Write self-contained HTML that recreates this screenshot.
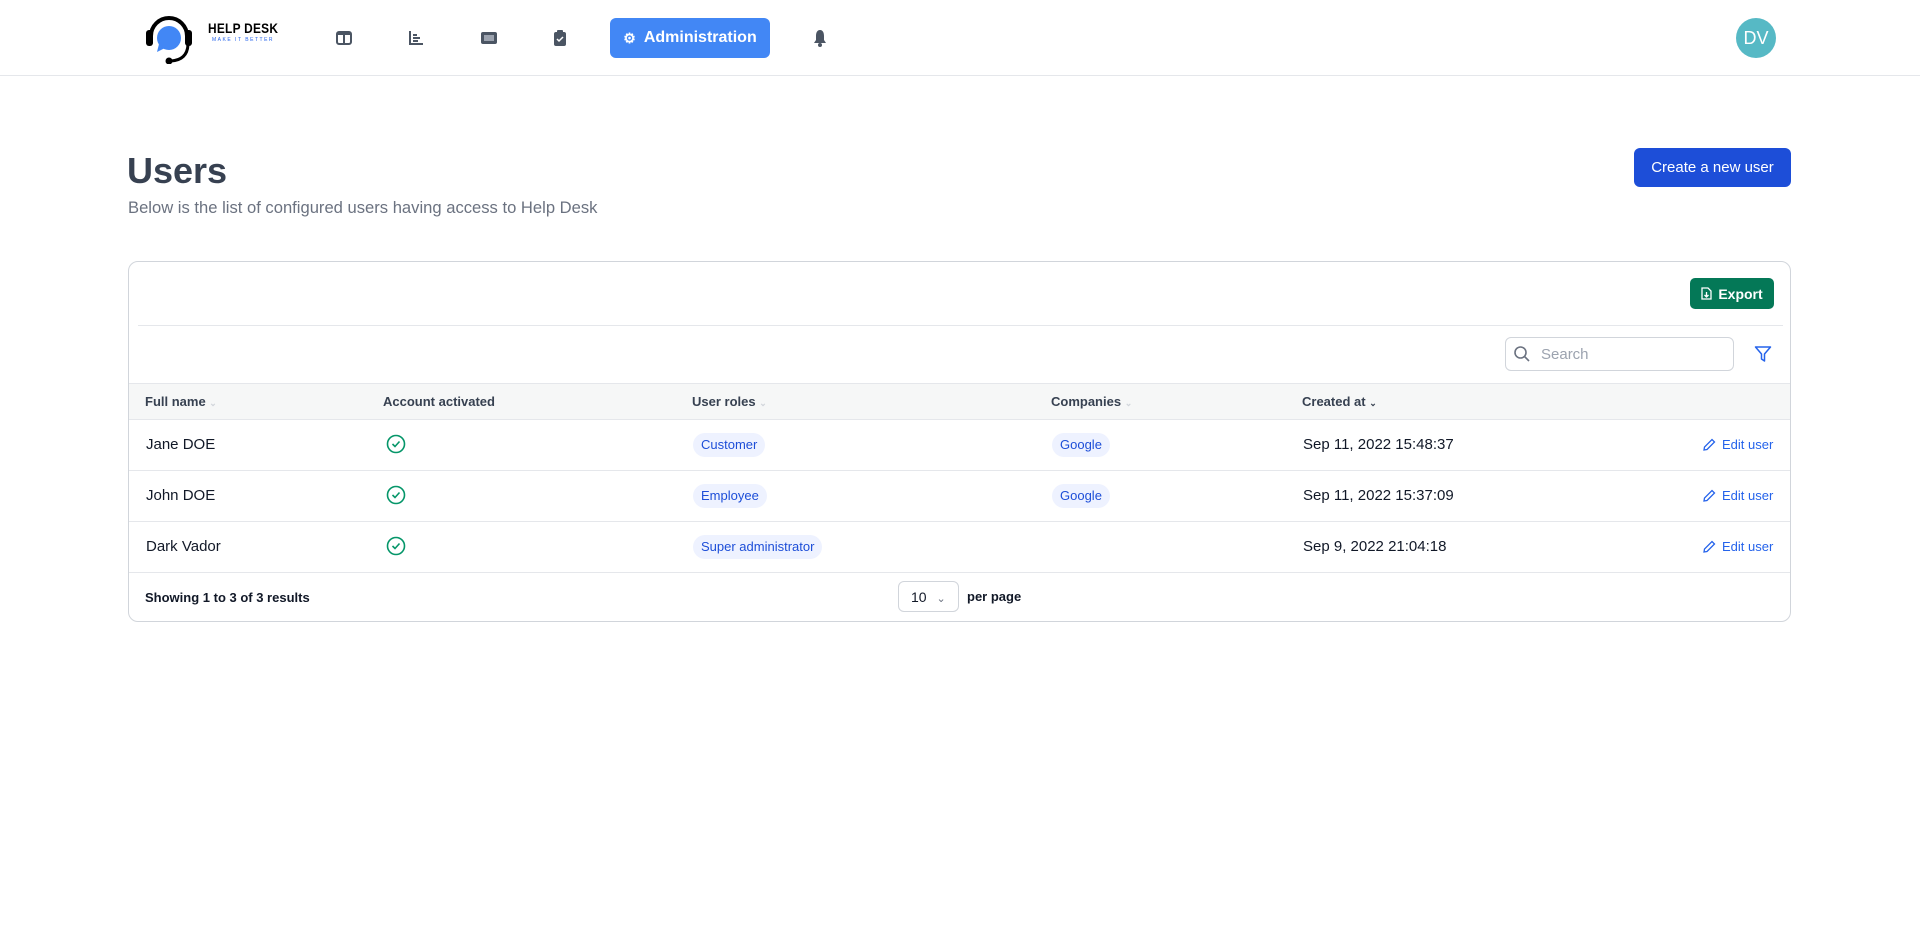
<!DOCTYPE html>
<html><head><meta charset="utf-8"><style>
*{box-sizing:border-box;margin:0;padding:0}
body{width:1920px;height:929px;background:#fff;font-family:"Liberation Sans",sans-serif;position:relative;overflow:hidden;color:#111827}
.a{position:absolute}
.nav{left:0;top:0;width:1920px;height:76px;border-bottom:1px solid #e5e7eb}
.th{font-size:13px;color:#374151;font-weight:bold;top:394px}
.td{font-size:15px;color:#111827}
.badge{background:#eef2ff;color:#1d4ed8;font-size:13px;border-radius:12px;padding:4px 8px;line-height:16px}
.edit{color:#2563eb;font-size:13px;display:flex;align-items:center;gap:6px}
.row{left:129px;width:1661px;border-top:1px solid #e5e7eb}
</style></head><body>
<div class="a nav"></div>
<svg class="a" style="left:141px;top:12px" width="60" height="52" viewBox="0 0 60 52">
<path d="M10 24 A18 18 0 0 1 46 24" fill="none" stroke="#000" stroke-width="4"/>
<rect x="5" y="18" width="7" height="16" rx="3" fill="#000"/>
<rect x="44" y="18" width="7" height="16" rx="3" fill="#000"/>
<circle cx="28" cy="26" r="12" fill="#4287f5"/>
<path d="M18 32 L16 40 L24 36Z" fill="#4287f5"/>
<path d="M47 33 Q46 48 30 49" fill="none" stroke="#000" stroke-width="3"/>
<circle cx="28" cy="49" r="3.5" fill="#000"/>
</svg>
<div class="a" style="left:208px;top:20px;font-size:14px;font-weight:bold;letter-spacing:0.3px;color:#000;transform:scaleX(0.85);transform-origin:left">HELP DESK</div>
<div class="a" style="left:212px;top:37px;font-size:5px;color:#2563eb;letter-spacing:1.5px">MAKE IT BETTER</div>
<svg class="a" style="left:336px;top:31px" width="16" height="14" viewBox="0 0 16 14"><rect x="1" y="1" width="14" height="12" rx="2" fill="none" stroke="#4b5563" stroke-width="2"/><rect x="7" y="2" width="2" height="10" fill="#4b5563"/><rect x="2" y="2" width="12" height="2" fill="#4b5563"/></svg>
<svg class="a" style="left:408px;top:30px" width="16" height="16" viewBox="0 0 16 16"><path d="M2 1V14H15" fill="none" stroke="#4b5563" stroke-width="2"/><path d="M5 5H9M5 8H12M5 11H10" stroke="#4b5563" stroke-width="2"/></svg>
<svg class="a" style="left:480px;top:31px" width="18" height="14" viewBox="0 0 18 14"><rect x="1" y="1" width="16" height="12" rx="2" fill="#4b5563"/><rect x="4" y="4" width="10" height="6" fill="#9ca3af"/></svg>
<svg class="a" style="left:553px;top:29px" width="14" height="18" viewBox="0 0 14 18"><rect x="1" y="3" width="12" height="14" rx="2" fill="#4b5563"/><rect x="4" y="1" width="6" height="4" rx="1" fill="#4b5563"/><path d="M4 10L6 12L10 8" fill="none" stroke="#fff" stroke-width="1.5"/></svg>
<div class="a" style="left:610px;top:18px;width:160px;height:40px;background:#4287f5;border-radius:6px;color:#fff;font-size:16px;font-weight:bold;display:flex;align-items:center;justify-content:center;gap:8px">
<span style="font-size:14px">⚙</span>Administration</div>
<svg class="a" style="left:813px;top:29px" width="14" height="18" viewBox="0 0 14 18"><path d="M7 1C4 1 3 4 3 7V11L1 14H13L11 11V7C11 4 10 1 7 1Z" fill="#4b5563"/><circle cx="7" cy="16" r="2" fill="#4b5563"/></svg>
<div class="a" style="left:1736px;top:18px;width:40px;height:40px;border-radius:50%;background:#56b9c5;color:#fff;font-size:18px;display:flex;align-items:center;justify-content:center">DV</div>
<div class="a" style="left:127px;top:150px;font-size:36px;font-weight:bold;color:#374151">Users</div>
<div class="a" style="left:128px;top:198px;font-size:16.6px;color:#6b7280;font-weight:300">Below is the list of configured users having access to Help Desk</div>
<div class="a" style="left:1634px;top:148px;width:157px;height:39px;background:#1d4ed8;border-radius:6px;color:#fff;font-size:15px;display:flex;align-items:center;justify-content:center">Create a new user</div>
<div class="a" style="left:128px;top:261px;width:1663px;height:361px;border:1px solid #d1d5db;border-radius:10px"></div>
<div class="a" style="left:1690px;top:278px;width:84px;height:31px;background:#047857;border-radius:5px;color:#fff;font-size:14px;font-weight:bold;display:flex;align-items:center;justify-content:center;gap:6px">
<svg width="11" height="13" viewBox="0 0 11 13"><path d="M1 1H7L10 4V12H1Z" fill="none" stroke="#fff" stroke-width="1.3"/><path d="M5.5 5V10M3.5 8L5.5 10L7.5 8" fill="none" stroke="#fff" stroke-width="1.3"/></svg>Export</div>
<div class="a" style="left:138px;top:325px;width:1645px;border-top:1px solid #e5e7eb"></div>
<div class="a" style="left:1505px;top:337px;width:229px;height:34px;border:1px solid #d1d5db;border-radius:6px"></div>
<svg class="a" style="left:1513px;top:345px" width="18" height="18" viewBox="0 0 18 18"><circle cx="7.5" cy="7.5" r="5.5" fill="none" stroke="#6b7280" stroke-width="1.6"/><path d="M11.5 11.5L16 16" stroke="#6b7280" stroke-width="1.6"/></svg>
<div class="a" style="left:1541px;top:346px;font-size:15px;color:#9ca3af">Search</div>
<svg class="a" style="left:1754px;top:345px" width="18" height="18" viewBox="0 0 18 18"><path d="M1.5 2H16.5L10.5 9V16L7.5 14V9Z" fill="none" stroke="#2563eb" stroke-width="1.5" stroke-linejoin="round"/></svg>
<div class="a" style="left:129px;top:383px;width:1661px;height:37px;background:#f6f7f7;border-top:1px solid #e5e7eb;border-bottom:1px solid #e5e7eb"></div>
<div class="a th" style="left:145px">Full name <span style="color:#d1d5db;font-size:9px">⌄</span></div>
<div class="a th" style="left:383px">Account activated</div>
<div class="a th" style="left:692px">User roles <span style="color:#d1d5db;font-size:9px">⌄</span></div>
<div class="a th" style="left:1051px">Companies <span style="color:#d1d5db;font-size:9px">⌄</span></div>
<div class="a th" style="left:1302px">Created at <span style="font-size:9px">⌄</span></div>
<div class="a row" style="top:470px"></div>
<div class="a row" style="top:521px"></div>
<div class="a row" style="top:572px"></div>
<div class="a td" style="left:146px;top:436px">Jane DOE</div>
<div class="a td" style="left:146px;top:487px">John DOE</div>
<div class="a td" style="left:146px;top:538px">Dark Vador</div>
<svg class="a" style="left:386px;top:434px" width="20" height="20" viewBox="0 0 20 20"><circle cx="10" cy="10" r="8.5" fill="none" stroke="#059669" stroke-width="1.6"/><path d="M6.5 10L9 12.5L13.5 7.5" fill="none" stroke="#059669" stroke-width="1.6"/></svg>
<svg class="a" style="left:386px;top:485px" width="20" height="20" viewBox="0 0 20 20"><circle cx="10" cy="10" r="8.5" fill="none" stroke="#059669" stroke-width="1.6"/><path d="M6.5 10L9 12.5L13.5 7.5" fill="none" stroke="#059669" stroke-width="1.6"/></svg>
<svg class="a" style="left:386px;top:536px" width="20" height="20" viewBox="0 0 20 20"><circle cx="10" cy="10" r="8.5" fill="none" stroke="#059669" stroke-width="1.6"/><path d="M6.5 10L9 12.5L13.5 7.5" fill="none" stroke="#059669" stroke-width="1.6"/></svg>
<div class="a badge" style="left:693px;top:433px">Customer</div>
<div class="a badge" style="left:693px;top:484px">Employee</div>
<div class="a badge" style="left:693px;top:535px">Super administrator</div>
<div class="a badge" style="left:1052px;top:433px">Google</div>
<div class="a badge" style="left:1052px;top:484px">Google</div>
<div class="a td" style="left:1303px;top:436px">Sep 11, 2022 15:48:37</div>
<div class="a td" style="left:1303px;top:487px">Sep 11, 2022 15:37:09</div>
<div class="a td" style="left:1303px;top:538px">Sep 9, 2022 21:04:18</div>
<div class="a edit" style="left:1702px;top:437px"><svg width="14" height="14" viewBox="0 0 14 14"><path d="M2 12L2.5 9L10 1.5L12.5 4L5 11.5Z" fill="none" stroke="#2563eb" stroke-width="1.3"/></svg>Edit user</div>
<div class="a edit" style="left:1702px;top:488px"><svg width="14" height="14" viewBox="0 0 14 14"><path d="M2 12L2.5 9L10 1.5L12.5 4L5 11.5Z" fill="none" stroke="#2563eb" stroke-width="1.3"/></svg>Edit user</div>
<div class="a edit" style="left:1702px;top:539px"><svg width="14" height="14" viewBox="0 0 14 14"><path d="M2 12L2.5 9L10 1.5L12.5 4L5 11.5Z" fill="none" stroke="#2563eb" stroke-width="1.3"/></svg>Edit user</div>
<div class="a" style="left:145px;top:590px;font-size:13px;font-weight:bold;color:#111827">Showing 1 to 3 of 3 results</div>
<div class="a" style="left:898px;top:581px;width:61px;height:31px;border:1px solid #d1d5db;border-radius:6px;font-size:14px;padding:7px 0 0 12px;color:#111827">10 <span style="color:#6b7280;font-size:11px;margin-left:6px">⌄</span></div>
<div class="a" style="left:967px;top:589px;font-size:13px;font-weight:bold">per page</div>
</body></html>
